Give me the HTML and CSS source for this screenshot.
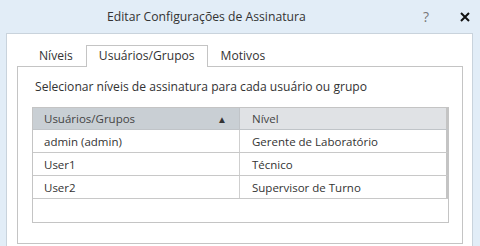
FILE: index.html
```html
<!DOCTYPE html>
<html lang="pt">
<head>
<meta charset="utf-8">
<link rel="stylesheet" href="styles.css">
</head>
<body>
<div class="window">
  <header class="titlebar">
    <h1 class="title">Editar Configurações de Assinatura</h1>
    <div class="actions">
      <span class="help">?</span>
      <svg class="close" width="10" height="10" viewBox="0 0 10 10"><path d="M1 1 L9 9 M9 1 L1 9" stroke="#111" stroke-width="2"/></svg>
    </div>
  </header>
  <main class="dialog">
    <nav class="tabs">
      <span class="tab">Níveis</span>
      <span class="tab active">Usuários/Grupos</span>
      <span class="tab">Motivos</span>
    </nav>
    <section class="panel">
      <p class="label">Selecionar níveis de assinatura para cada usuário ou grupo</p>
      <div class="grid">
        <div class="row head">
          <div class="cell sorted"><span>Usuários/Grupos</span><span class="arrow">▲</span></div>
          <div class="cell last">Nível</div>
        </div>
        <div class="row">
          <div class="cell">admin (admin)</div>
          <div class="cell last">Gerente de Laboratório</div>
        </div>
        <div class="row">
          <div class="cell">User1</div>
          <div class="cell last">Técnico</div>
        </div>
        <div class="row">
          <div class="cell">User2</div>
          <div class="cell last">Supervisor de Turno</div>
        </div>
      </div>
    </section>
  </main>
</div>
</body>
</html>
```
FILE: styles.css
```css
* { box-sizing: border-box; }
html, body { margin: 0; padding: 0; }
body {
  width: 480px;
  height: 246px;
  overflow: hidden;
  background: #e2edf7;
  font-family: "Open Sans", "Noto Sans", sans-serif;
  color: #333;
}
.window {
  display: flex;
  flex-direction: column;
  height: 246px;
}
.titlebar {
  height: 33px;
  display: flex;
  align-items: center;
  padding-left: 107px;
}
.title {
  margin: 0;
  flex: 1;
  font-size: 12.2px;
  font-weight: normal;
  color: #333;
}
.actions {
  display: flex;
  align-items: center;
  gap: 31px;
  padding-right: 10px;
}
.help {
  font-size: 14px;
  color: #777;
}
.close { display: block; }
.dialog {
  flex: 1;
  margin: 0 7px 0 6px;
  background: #fff;
  border: 1px solid #c9d3dc;
  border-bottom: none;
  padding: 11px 9px 0 10px;
  display: flex;
  flex-direction: column;
}
.tabs {
  display: flex;
  height: 22px;
  padding-left: 9px;
  position: relative;
  z-index: 1;
}
.tab {
  font-size: 12.1px;
  padding: 0 12px;
  line-height: 20px;
  border: 1px solid transparent;
  border-bottom: none;
  color: #333;
}
.tab.active {
  background: #fff;
  border-color: #c4c4c4;
  height: 22px;
}
.panel {
  margin-top: -1px;
  height: 178px;
  border: 1px solid #c4c4c4;
  padding: 11px 13px 0 14px;
}
.label {
  margin: 0 0 11px 3px;
  font-size: 12.1px;
  line-height: 18px;
  color: #333;
}
.grid {
  height: 116px;
  border: 1px solid #c4c4c4;
}
.row {
  display: grid;
  grid-template-columns: 207px 1fr;
  height: 23px;
  border-bottom: 1px solid #c8c8c8;
  font-size: 11.5px;
}
.row.head {
  height: 22px;
  border-bottom: 1px solid #c0c4c8;
}
.cell {
  display: flex;
  align-items: center;
  padding-left: 11px;
  border-right: 1px solid #cfcfcf;
  color: #333;
}
.cell.last {
  border-right: 2px solid #c4c4c4;
  padding-left: 12px;
}
.head .cell { background: #e0e2e5; color: #444; }
.head .cell.sorted {
  background: #c9cfd4;
  justify-content: space-between;
  padding-right: 12px;
  border-right: 1px solid #c0c4c8;
}
.arrow {
  font-size: 10px;
  color: #333;
}
```
